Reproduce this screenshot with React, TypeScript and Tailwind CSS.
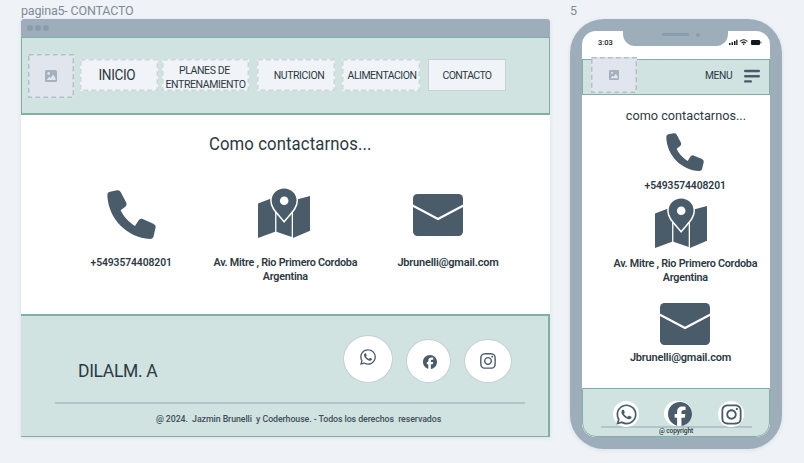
import type { ReactNode } from "react";
import { FaWhatsapp, FaInstagram, FaFacebook } from "react-icons/fa6";

function PhoneIcon({ className }: { className: string }) {
  return (
    <svg viewBox="0 0 147 147" className={className} fill="#4a5c6a">
      <path d="M1 16Q1 7 9 5L30 1Q38 0 41 6L58 38Q61 45 55 50L41 61C49 79 66 97 84 108L94 92Q99 84 107 87L139 101Q147 105 146 112L140 138Q138 147 129 147C60 143 4 88 1 16z" />
    </svg>
  );
}

function PictureIcon({ className }: { className: string }) {
  return (
    <svg viewBox="0 0 12 12" className={className}>
      <rect width="12" height="12" rx="1.6" fill="#a3b1bf" />
      <circle cx="3.6" cy="3.4" r="1.3" fill="#e1e6ee" />
      <path d="M1.6 10 4.2 6.8 5.6 8.1 8.2 4.6 10.6 8.4V10z" fill="#e1e6ee" />
    </svg>
  );
}

function DashedBox({ className, children, stroke, width, height }: { className: string; children: ReactNode; stroke: string; width: number; height: number }) {
  return (
    <div className={`relative flex shrink-0 items-center justify-center ${className}`}>
      <svg className="absolute inset-0 h-full w-full">
        <rect x=".75" y=".75" width={width - 1.5} height={height - 1.5} fill="none" stroke={stroke} strokeWidth="1.5" strokeDasharray="5 3" />
      </svg>
      {children}
    </div>
  );
}

function MapIcon({ className }: { className: string }) {
  return (
    <svg viewBox="0 0 52 51" className={className} fill="#4a5c6a">
      <path d="M0 15.500 17.100 9V43.700L0 50z" />
      <path d="M18.400 18H33.700V49L18.400 43.700z" />
      <path d="M35 12.500 52 8V42.700L35 50z" />
      <path d="M26.100-.3C18.700-.3 12.900 5.500 12.900 12.600 12.900 20 18.500 24.500 26.100 33.800 33.700 24.500 39.300 20 39.300 12.600 39.300 5.500 33.500-.3 26.100-.3z" stroke="#fff" strokeWidth="1.500" />
      <circle cx="26.200" cy="12.700" r="4.300" fill="#fff" />
    </svg>
  );
}

function MailIcon({ className }: { className: string }) {
  return (
    <svg viewBox="0 0 50 42" className={className}>
      <rect width="50" height="42" rx="4.500" fill="#4a5c6a" />
      <path d="M-1 11.200 25 25 51 11.200" fill="none" stroke="#fff" strokeWidth="2.200" />
    </svg>
  );
}

function Desktop() {
  return (
    <section className="ml-[21px] w-[529px] shrink-0">
      <h1 className="h-[19px] whitespace-nowrap pt-[2px] text-[12.5px] leading-[17px] tracking-[-0.18px] text-[#7d8b98]">pagina5- CONTACTO</h1>
      <div className="shadow-[0_1px_4px_rgba(120,140,160,0.18)]">
        <div className="flex h-[18px] items-center gap-[2px] rounded-t-[3px] bg-[#9dadba] pl-[6px]">
          <span className="size-[6px] rounded-full bg-[#8b9cab]" />
          <span className="size-[6px] rounded-full bg-[#8b9cab]" />
          <span className="size-[6px] rounded-full bg-[#8b9cab]" />
        </div>
        <nav className="flex h-[78px] items-start border border-b-2 border-[#80b0a5] bg-[#d1e3e1] pl-[6px] text-[10.5px] text-[#2c3943]">
          <DashedBox className="mt-[16px] h-[44px] w-[46px] bg-[#e1e6ee]" stroke="#b5bfc9" width={46} height={44}>
            <PictureIcon className="size-[12px]" />
          </DashedBox>
          <DashedBox className="mt-[21px] ml-[6px] h-[32px] w-[78px] bg-[#f0f4f8]" stroke="#cbd8da" width={78} height={32}>
            <span className="relative mr-[5px] scale-x-97 pt-px text-[14px] tracking-[-0.4px]">INICIO</span>
          </DashedBox>
          <DashedBox className="mt-[21px] ml-[4px] h-[32px] w-[87px] bg-[#f0f4f8]" stroke="#cbd8da" width={87} height={32}>
            <span className="relative mt-[6px] whitespace-nowrap text-center leading-[14px] tracking-[-0.4px]">PLANES DE&nbsp;<br />ENTRENAMIENTO</span>
          </DashedBox>
          <DashedBox className="mt-[21px] ml-[8px] h-[32px] w-[78px] bg-[#f0f4f8]" stroke="#cbd8da" width={78} height={32}>
            <span className="relative ml-[6px] pt-px tracking-[-0.4px]">NUTRICION</span>
          </DashedBox>
          <DashedBox className="mt-[21px] ml-[7px] h-[32px] w-[78px] bg-[#f0f4f8]" stroke="#cbd8da" width={78} height={32}>
            <span className="relative ml-[2px] pt-px tracking-[-0.5px]">ALIMENTACION</span>
          </DashedBox>
          <div className="mt-[21px] ml-[8px] flex h-[32px] w-[78px] items-center justify-center border border-[#c5d2d5] bg-[#f0f4f8]">
            <span className="pt-px tracking-[-0.65px]">CONTACTO</span>
          </div>
        </nav>
        <main className="h-[199px] bg-white pt-[17px] text-[#2c3943]">
          <h2 className="scale-x-93 pl-[10px] text-center text-[18px] leading-6 tracking-[0.1px]">Como contactarnos...</h2>
          <div className="mt-[31px] flex text-[11px] leading-[14px] font-semibold">
            <div className="ml-[60px] flex w-[100px] flex-col items-center">
              <PhoneIcon className="mt-[3px] size-[49px]" />
              <p className="mt-[17px] scale-x-94 tracking-[-0.1px]">+5493574408201</p>
            </div>
            <div className="ml-[24px] flex w-[160px] flex-col items-center">
              <MapIcon className="mt-[1px] mr-[3px] h-[51px] w-[52px] overflow-visible" />
              <p className="mt-[17px] scale-x-98 whitespace-nowrap text-center tracking-[-0.25px]">Av. Mitre , Rio Primero Cordoba<br />Argentina</p>
            </div>
            <div className="ml-[23px] flex w-[120px] flex-col items-center">
              <MailIcon className="mt-[7px] mr-[21px] h-[42px] w-[50px]" />
              <p className="mt-[20px] tracking-[-0.2px]">Jbrunelli@gmail.com</p>
            </div>
          </div>
        </main>
        <footer className="h-[123px] border-t-2 border-r-2 border-b border-[#80b0a5] bg-[#d1e3e1] text-[#2c3943]">
          <div className="flex h-[87px] items-start pl-[57px]">
            <p className="mt-[42px] w-[265px] origin-left scale-x-92 text-[19px] leading-[26px] tracking-[-0.35px]">DILALM. A</p>
            <div className="mt-[19px] flex h-[48px] w-[50px] justify-center rounded-[50%] border border-[#c3d0d5] bg-white pt-[12px]">
              <FaWhatsapp className="size-[18px] text-[#4a5c6a]" />
            </div>
            <div className="mt-[23px] ml-[13px] flex h-[44px] w-[45px] justify-center rounded-[50%] border border-[#c3d0d5] bg-white pt-[15px] pl-[3px]">
              <FaFacebook className="size-[14px] text-[#4a5c6a]" />
            </div>
            <div className="mt-[23px] ml-[13px] flex h-[44px] w-[48px] justify-center rounded-[50%] border border-[#c3d0d5] bg-white pt-[12px]">
              <FaInstagram className="size-[18px] text-[#4a5c6a]" />
            </div>
          </div>
          <div className="mt-[-1px] ml-[34px] h-[2px] w-[470px] bg-[#b4c5c9]" />
          <p className="mt-[8px] ml-[28px] scale-x-93 whitespace-pre text-center text-[9.5px] leading-[14px] font-medium tracking-[-0.1px] text-[#3f4f5a]">{"@ 2024.  Jazmin Brunelli  y Coderhouse. - Todos los derechos  reservados"}</p>
        </footer>
      </div>
    </section>
  );
}

function StatusIcons() {
  return (
    <svg viewBox="0 0 34 8" className="h-[8px] w-[34px]" fill="#111820">
      <path d="M1 5h1.500v2H1zM3.500 4.200H5V7H3.500zM6 3h1.500v4H6zM8.200 1.800h1.300V7H8.200z" />
      <path d="M12 3.400q3.700-3.200 7.400 0M13.600 5q2.100-1.700 4.200 0" fill="none" stroke="#111820" strokeWidth="1.100" />
      <circle cx="15.700" cy="6.300" r=".8" />
      <rect x="23" y="2" width="9" height="5" rx="1" />
      <rect x="32.500" y="3.500" width=".8" height="2" />
    </svg>
  );
}

function Phone() {
  return (
    <section className="ml-[20px] w-[212px] shrink-0">
      <h1 className="h-[19px] pt-[2px] text-[12.5px] leading-[17px] text-[#7d8b98]">5</h1>
      <div className="h-[430px] rounded-[34px] bg-[#9dadba] p-[12px] shadow-[0_1px_4px_rgba(120,140,160,0.18)]">
        <div className="relative flex h-[406px] flex-col overflow-hidden rounded-[14px] bg-white text-[#2c3943]">
          <div className="absolute top-0 left-[41px] h-[15px] w-[105px] rounded-b-[12px] bg-[#9dadba]">
            <span className="absolute top-[2px] left-[39px] h-[3px] w-[27px] rounded-full bg-[#8b9cab]" />
            <span className="absolute top-[2px] left-[73px] size-[4px] rounded-full bg-[#8b9cab]" />
          </div>
          <div className="flex h-[28px] shrink-0 justify-between pt-[7px] pr-[8px] pl-[16px]">
            <span className="text-[7.5px] leading-[10px] font-medium text-[#111820]">3:03</span>
            <StatusIcons />
          </div>
          <header className="flex h-[36px] shrink-0 items-center border border-[#80b0a5] bg-[#d1e3e1] pl-[8px]">
            <DashedBox className="mt-[-4px] h-[36px] w-[46px] bg-[#e1e6ee]" stroke="#b5bfc9" width={46} height={36}>
              <PictureIcon className="size-[10px]" />
            </DashedBox>
            <span className="ml-[68px] mt-[-1px] w-[39px] origin-left scale-x-93 text-[11px] tracking-[-0.35px]">MENU</span>
            <svg viewBox="0 0 16 14" className="mt-[-2px] h-[14px] w-[16px]" stroke="#4a5c6a" strokeWidth="2.4" strokeLinecap="round">
              <path d="M1.200 2H14.800M1.200 7.200H14.800M1.200 12.400H6.800" />
            </svg>
          </header>
          <main className="flex h-[293px] shrink-0 flex-col items-center pl-[19px] text-[11px] leading-[14px] font-semibold">
            <h2 className="mt-[11px] scale-x-94 text-[13.5px] leading-[18px] font-normal">como contactarnos...</h2>
            <PhoneIcon className="mt-[9px] mr-[1px] size-[38px]" />
            <p className="mt-[8px] scale-x-94 tracking-[-0.1px]">+5493574408201</p>
            <MapIcon className="mt-[5px] mr-[10px] h-[51px] w-[52px] overflow-visible" />
            <p className="mt-[8px] scale-x-98 whitespace-nowrap text-center tracking-[-0.25px]">Av. Mitre , Rio Primero Cordoba<br />Argentina</p>
            <MailIcon className="mt-[18px] mr-[1px] h-[42px] w-[50px]" />
            <p className="mt-[6px] mr-[10px] tracking-[-0.2px]">Jbrunelli@gmail.com</p>
          </main>
          <footer className="h-[49px] shrink-0 rounded-b-[14px] border border-[#80b0a5] bg-[#d1e3e1]">
            <div className="flex h-[37px] items-start pt-[12px] pl-[30px]">
              <div className="flex size-[26px] items-center justify-center rounded-full bg-white">
                <FaWhatsapp className="size-[23px] text-[#4a5c6a]" />
              </div>
              <div className="ml-[25px] flex h-[25px] w-[28px] items-center justify-end rounded-full bg-white">
                <FaFacebook className="size-[24px] text-[#4a5c6a]" />
              </div>
              <div className="ml-[26px] flex size-[26px] items-center justify-center rounded-full bg-white">
                <FaInstagram className="size-[23px] text-[#4a5c6a]" />
              </div>
            </div>
            <div className="ml-[18px] h-[1.5px] w-[151px] bg-[#b4c5c9]" />
            <p className="mt-[-1px] scale-x-94 text-center text-[7px] leading-[8px] font-medium tracking-[-0.1px]">@ copyright</p>
          </footer>
        </div>
      </div>
    </section>
  );
}

export default function App() {
  return (
    <div className="flex h-[463px] w-[804px] overflow-hidden bg-[#eff3f7] font-['Roboto','Noto_Sans',sans-serif]">
      <Desktop />
      <Phone />
    </div>
  );
}
